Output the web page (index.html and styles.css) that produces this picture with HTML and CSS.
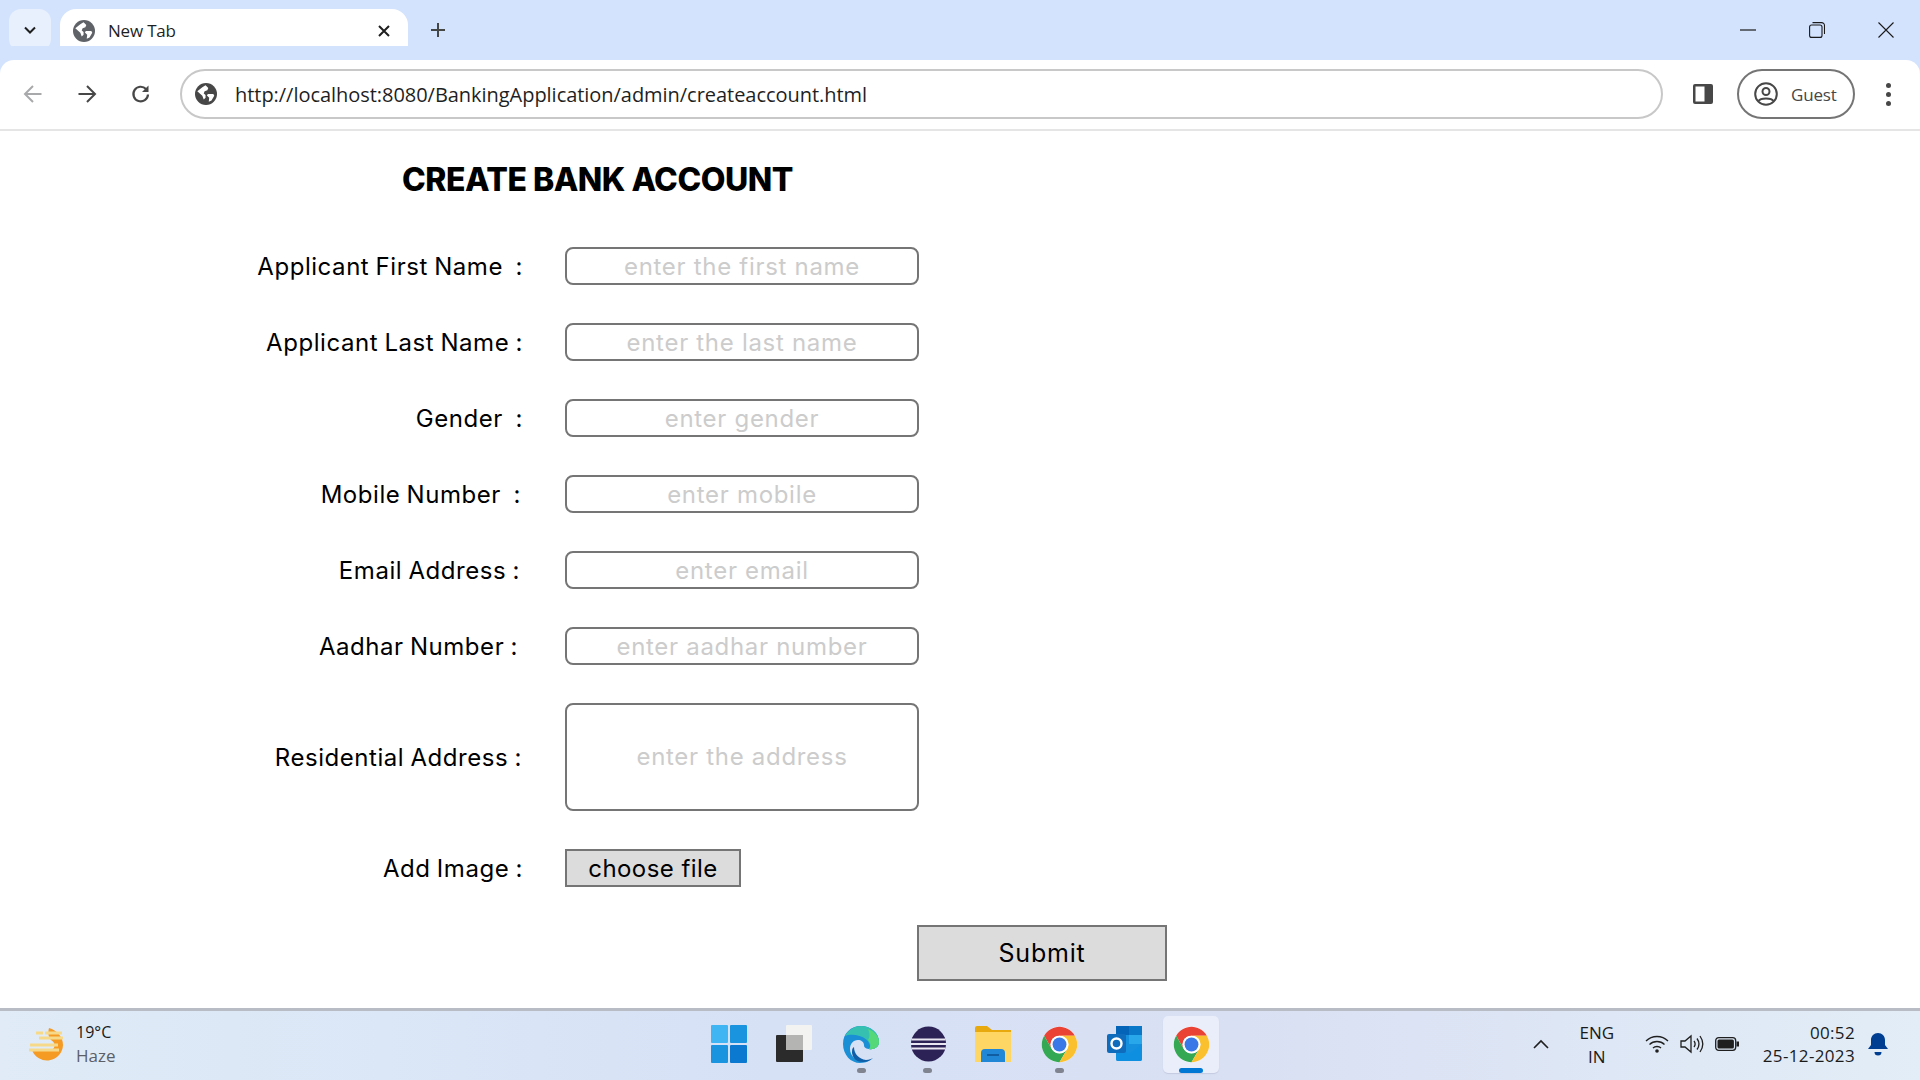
FILE: index.html
```html
<!DOCTYPE html>
<html lang="en">
  <head>
    <meta charset="UTF-8" />
    <title>New Tab</title>
    <link rel="stylesheet" href="styles.css">
  </head>
  <body>
    <svg class="defs" width="0" height="0">
      <defs>
        <symbol id="globe" viewBox="0 0 24 24">
          <circle cx="12" cy="12" r="12" fill="currentColor"/>
          <path d="M2.500 9 8 4.500 11.500 2.500l3 3-1 2.500-3 1-1 2.500 2 1.500v3l-2 2-1.500-4L2.500 9Z" fill="#fff"/>
          <path d="M14 12h6l1 2-3 5-3 1.500.5-4.500-2.500-2.500 1-1.500Z" fill="#fff"/>
        </symbol>
        <symbol id="chrome" viewBox="0 0 48 48">
          <circle cx="24" cy="24" r="23" fill="#fff"/>
          <path d="M4.100 12.500A23 23 0 0 1 43.900 12.500H24A11.500 11.500 0 0 0 14 29.750Z" fill="#ea4335"/>
          <path d="M4.100 12.500A23 23 0 0 0 24 47L34 29.750A11.500 11.500 0 0 1 14 29.750Z" fill="#34a853"/>
          <path d="M43.900 12.500A23 23 0 0 1 24 47L34 29.750A11.500 11.500 0 0 0 24 12.500Z" fill="#fbc02d"/>
          <circle cx="24" cy="24" r="11.500" fill="#fff"/>
          <circle cx="24" cy="24" r="9" fill="#3b78e7"/>
        </symbol>
      </defs>
    </svg>

    <header class="tabstrip">
      <button class="tab-search">
        <svg width="16" height="16" viewBox="0 0 16 16"><path d="M3 5.500 8 10.500l5-5" fill="none" stroke="#1f1f1f" stroke-width="2"/></svg>
      </button>
      <div class="tab">
        <svg class="tab-globe" width="22" height="22"><use href="#globe"/></svg>
        <span class="tab-title">New Tab</span>
        <svg width="14" height="14" viewBox="0 0 14 14"><path d="M2 2l10 10M12 2 2 12" stroke="#1f1f1f" stroke-width="2"/></svg>
      </div>
      <button class="new-tab">
        <svg width="16" height="16" viewBox="0 0 16 16"><path d="M8 1v14M1 8h14" stroke="#444746" stroke-width="2"/></svg>
      </button>
      <div class="window-controls">
        <button><svg width="16" height="16" viewBox="0 0 16 16"><path d="M0 8h16" stroke="#1a1a1a" stroke-width="1.200"/></svg></button>
        <button><svg width="16" height="16" viewBox="0 0 16 16" fill="none" stroke="#1a1a1a" stroke-width="1.100"><rect x=".6" y="3" width="12.400" height="12.400" rx="2"/><path d="M3.500.6h9a3 3 0 0 1 3 3v8.500"/></svg></button>
        <button><svg width="16" height="16" viewBox="0 0 16 16"><path d="M.5.500l15 15M15.500.500l-15 15" stroke="#1a1a1a" stroke-width="1.100"/></svg></button>
      </div>
    </header>

    <nav class="toolbar">
      <button class="nav-btn">
        <svg width="20" height="20" viewBox="0 0 20 20" fill="none" stroke="#a8a9aa" stroke-width="2"><path d="M18.500 10H2M10 2l-8 8 8 8"/></svg>
      </button>
      <button class="nav-btn">
        <svg width="20" height="20" viewBox="0 0 20 20" fill="none" stroke="#474747" stroke-width="2"><path d="M1.500 10H18M10 2l8 8-8 8"/></svg>
      </button>
      <button class="nav-btn">
        <svg width="20" height="20" viewBox="0 0 20 20" fill="none" stroke="#474747" stroke-width="2.200"><path d="M17 10.500A7.300 7.300 0 1 1 15 5"/><path d="M17.500 1.500v6.500h-6.500z" fill="#474747" stroke="none"/></svg>
      </button>
      <div class="omnibox">
        <svg class="omni-globe" width="22" height="22"><use href="#globe"/></svg>
        <span class="url">http://localhost:8080/BankingApplication/admin/createaccount.html</span>
      </div>
      <button class="side-btn">
        <svg width="22" height="22" viewBox="0 0 22 22"><rect x="1" y="1" width="20" height="20" rx="2" fill="#474747"/><rect x="3.500" y="3.500" width="9" height="15" fill="#fff"/></svg>
      </button>
      <div class="guest">
        <svg width="24" height="24" viewBox="0 0 24 24" fill="none" stroke="#474747" stroke-width="2"><circle cx="12" cy="12" r="10.800"/><circle cx="12" cy="9.500" r="3.500"/><path d="M4.500 19c2-3.500 13-3.500 15 0"/></svg>
        <span>Guest</span>
      </div>
      <button class="menu-btn">
        <i></i><i></i><i></i>
      </button>
    </nav>

    <main class="page">
      <h1 class="title">CREATE BANK ACCOUNT</h1>
      <form class="account-form">
        <label class="field-label">Applicant First Name&nbsp; :</label>
        <input class="field" type="text" placeholder="enter the first name">
        <label class="field-label">Applicant Last Name :</label>
        <input class="field" type="text" placeholder="enter the last name">
        <label class="field-label">Gender&nbsp; :</label>
        <input class="field" type="text" placeholder="enter gender">
        <label class="field-label nudge-2">Mobile Number&nbsp; :</label>
        <input class="field" type="text" placeholder="enter mobile">
        <label class="field-label nudge-4">Email Address :</label>
        <input class="field" type="text" placeholder="enter email">
        <label class="field-label nudge-5">Aadhar Number :</label>
        <input class="field" type="text" placeholder="enter aadhar number">
        <label class="field-label nudge-1">Residential Address :</label>
        <textarea class="field area" placeholder="enter the address"></textarea>
        <label class="field-label">Add Image :</label>
        <button class="file-btn" type="button">choose file</button>
        <button class="submit-btn" type="button">Submit</button>
      </form>
    </main>

    <footer class="taskbar">
      <div class="weather">
        <svg width="40" height="40" viewBox="0 0 40 40">
          <path d="M22 4c8 2 14 9 14 17a16 16 0 0 1-31 5h20c4-3 3-8-1-10-3-3-3-8-2-12Z" fill="#f59a23"/>
          <path d="M9 9h7M18 9h17M12 14h24M3 21h28M2 26h30" stroke="#f7d98a" stroke-width="3"/>
        </svg>
        <div class="weather-text">
          <span class="temp">19°C</span>
          <span class="cond">Haze</span>
        </div>
      </div>

      <div class="apps">
        <div class="app">
          <svg width="36" height="38" viewBox="0 0 36 38">
            <rect x="0" y="0" width="17" height="18" rx="1" fill="#3fb6f3"/>
            <rect x="19" y="0" width="17" height="18" rx="1" fill="#1b94e0"/>
            <rect x="0" y="20" width="17" height="18" rx="1" fill="#1b94e0"/>
            <rect x="19" y="20" width="17" height="18" rx="1" fill="#0c79d1"/>
          </svg>
        </div>
        <div class="app">
          <svg width="38" height="38" viewBox="0 0 38 38">
            <rect x="0" y="10" width="27" height="27" rx="1" fill="#2b2b2b"/>
            <rect x="10" y="0" width="26" height="25" rx="1" fill="#f3f3f1"/>
            <rect x="10" y="10" width="17" height="15" fill="#b4b4b2"/>
          </svg>
        </div>
        <div class="app dot">
          <svg width="38" height="38" viewBox="0 0 38 38">
            <path d="M1 19C1 8 9 1 19 1c10 0 18 7 18 16 0 5-5 8-10 7-4-.5-5-2-5-4 0-3-3-5-6-5-5 0-8 4-8 9 0 7 6 12 13 12 3 0 6-1 8-2-3 3-7 4-11 4C9 38 1 30 1 19Z" fill="#1b8fd6"/>
            <path d="M3 11C7 4 13 1 19 1c10 0 18 7 18 16 0 5-5 8-10 7 2-2 1-6-2-9C18 9 8 9 3 11Z" fill="#35c0b0"/>
            <path d="M26 4c6 2 11 7 11 13 0 5-5 8-10 7 2-2 2-6-1-9 2-3 2-7 0-11Z" fill="#55d878"/>
            <path d="M12 22c0 7 5 12 12 13 3 0 5-1 7-2-3 3-7 4-10 4-6 0-10-3-11-9 0-3 0-5 2-6Z" fill="#0f5fa8"/>
          </svg>
        </div>
        <div class="app dot">
          <svg width="38" height="38" viewBox="0 0 38 38">
            <path d="M19 0a19 19 0 0 0 0 38A19 19 0 0 1 19 0Z" fill="#f0961f"/>
            <circle cx="20.500" cy="19" r="17.500" fill="#2c2255"/>
            <path d="M3.500 14.500h34M3 19h35M3.500 23.500h34" stroke="#e9e6f2" stroke-width="2"/>
          </svg>
        </div>
        <div class="app">
          <svg width="38" height="36" viewBox="0 0 38 36">
            <path d="M1 2a2 2 0 0 1 2-2h10l5 4h19v32H1Z" fill="#e8a90e"/>
            <path d="M1 6h36v30H1Z" fill="#fdd663"/>
            <path d="M7 27a4 4 0 0 1 4-4h16a4 4 0 0 1 4 4v9H7Z" fill="#1f87d6"/>
            <path d="M13 29h12" stroke="#0c4f8f" stroke-width="1.500"/>
          </svg>
        </div>
        <div class="app dot"><svg width="37" height="37"><use href="#chrome"/></svg></div>
        <div class="app">
          <svg width="36" height="36" viewBox="0 0 36 36">
            <rect x="9" y="0" width="26" height="35" rx="2" fill="#1490df"/>
            <rect x="9" y="0" width="13" height="9" fill="#0364b8"/>
            <rect x="22" y="0" width="13" height="9" fill="#0a78c8"/>
            <rect x="22" y="9" width="13" height="9" fill="#28a8ea"/>
            <path d="M9 18 22 28 35 18v15a2 2 0 0 1-2 2H11a2 2 0 0 1-2-2Z" fill="#0f8fe0"/>
            <rect x="0" y="8" width="19" height="19" rx="2" fill="#0f6cbd"/>
            <circle cx="9.500" cy="17.500" r="5" fill="none" stroke="#fff" stroke-width="2.400"/>
          </svg>
        </div>
        <div class="app active"><svg width="37" height="37"><use href="#chrome"/></svg></div>
      </div>

      <div class="tray">
        <svg class="tray-chevron" width="16" height="10" viewBox="0 0 16 10"><path d="M1 9l7-7 7 7" fill="none" stroke="#1f1f1f" stroke-width="1.600"/></svg>
        <div class="lang"><span>ENG</span><span>IN</span></div>
        <div class="tray-icons">
          <svg width="24" height="20" viewBox="0 0 24 20" fill="none" stroke="#1f1f1f" stroke-width="1.300"><path d="M1 7c6-6 16-6 22 0M4.500 10.500c4-4 11-4 15 0M8 14c2-2 6-2 8 0"/><circle cx="12" cy="17" r="1.800" fill="#1f1f1f" stroke="none"/></svg>
          <svg width="24" height="20" viewBox="0 0 24 20" fill="none" stroke="#1f1f1f" stroke-width="1.300"><path d="M1 7v6h4l6 5V2L5 7Z"/><path d="M14 7c1.500 2 1.500 4 0 6M17 4.500c2.500 3.500 2.500 7.500 0 11M20 2c3.500 5 3.500 11 0 16"/></svg>
          <svg width="24" height="14" viewBox="0 0 24 14"><rect x=".7" y=".7" width="20" height="12.600" rx="3" fill="none" stroke="#1f1f1f" stroke-width="1.300"/><rect x="2.500" y="2.500" width="16.400" height="9" rx="1.500" fill="#1f1f1f"/><rect x="21.500" y="4.500" width="2.500" height="5" fill="#1f1f1f"/></svg>
        </div>
        <div class="clock"><span>00:52</span><span>25-12-2023</span></div>
        <svg class="bell" width="20" height="24" viewBox="0 0 20 24"><path d="M10 1c4 0 7 3 7 7v5l3 4H0l3-4V8c0-4 3-7 7-7Z" fill="#003e92"/><path d="M6.500 20h7a3.500 3.500 0 0 1-7 0Z" fill="#003e92"/></svg>
      </div>
    </footer>
  </body>
</html>
```
FILE: styles.css
```css
* {
  box-sizing: border-box;
  padding: 0;
  margin: 0;
}
html {
  font-family: "Open Sans", "Noto Sans", sans-serif;
}
body {
  display: flex;
  flex-direction: column;
  height: 1080px;
  overflow: hidden;
  background-color: #fff;
}
button {
  display: flex;
  align-items: center;
  justify-content: center;
  border: none;
  background: none;
}
.defs {
  display: block;
  height: 0;
}

/* browser chrome */
.tabstrip {
  display: flex;
  align-items: flex-end;
  height: 60px;
  padding-left: 9px;
  background-color: #d3e3fd;
}
.tab-search {
  width: 42px;
  height: 42px;
  margin-bottom: 9px;
  border-radius: 12px;
  background-color: #e8f0fe;
}
.tab {
  position: relative;
  display: flex;
  align-items: center;
  width: 348px;
  height: 51px;
  margin-left: 9px;
  padding: 0 17px 8px 13px;
  border-radius: 16px 16px 0 0;
  background-color: #fff;
}
.tab::before,
.tab::after {
  content: "";
  position: absolute;
  bottom: 0;
  width: 14px;
  height: 14px;
  background-color: #d3e3fd;
}
.tab::before {
  left: -14px;
  border-bottom-right-radius: 14px;
  box-shadow: 5px 5px 0 #fff;
}
.tab::after {
  right: -14px;
  border-bottom-left-radius: 14px;
  box-shadow: -5px 5px 0 #fff;
}
.tab-globe {
  color: #5f6368;
}
.tab-title {
  flex: 1;
  margin-left: 13px;
  font-size: 17px;
  letter-spacing: -0.2px;
  color: #1f1f1f;
}
.new-tab {
  width: 30px;
  height: 30px;
  margin: 0 0 15px 15px;
}
.window-controls {
  display: flex;
  margin-left: auto;
  height: 60px;
}
.window-controls button {
  width: 69px;
}
.toolbar {
  position: relative;
  display: flex;
  align-items: center;
  height: 71px;
  padding: 0 12px 1px 6px;
  border-bottom: 2px solid #e5e5e5;
  border-radius: 14px 14px 0 0;
  background-color: #fff;
}
.tabstrip + .toolbar {
  box-shadow: 0 -14px 0 #d3e3fd;
}
.nav-btn {
  width: 54px;
  height: 50px;
}
.omnibox {
  display: flex;
  flex: 1;
  align-items: center;
  height: 50px;
  margin-left: 12px;
  padding-left: 13px;
  border: 2px solid #c8c8c8;
  border-radius: 25px;
}
.omni-globe {
  color: #474747;
}
.url {
  margin-left: 18px;
  font-size: 20px;
  letter-spacing: -0.04px;
  color: #1f1f1f;
}
.side-btn {
  width: 40px;
  height: 40px;
  margin-left: 20px;
}
.guest {
  display: flex;
  align-items: center;
  width: 118px;
  height: 50px;
  margin-left: 14px;
  padding-left: 15px;
  border: 2px solid #757575;
  border-radius: 25px;
  font-size: 17px;
  letter-spacing: -0.2px;
  color: #474747;
}
.guest span {
  margin-left: 13px;
}
.menu-btn {
  flex-direction: column;
  gap: 4px;
  width: 40px;
  height: 40px;
  margin-left: 13px;
}
.menu-btn i {
  width: 5px;
  height: 5px;
  border-radius: 50%;
  background-color: #474747;
}

/* the form */
.page {
  flex: 1;
  font-family: Inter, "Noto Sans", sans-serif;
  color: #000;
}
.title {
  margin: 27px 0 45px 402px;
  font-size: 32px;
  line-height: 44px;
  font-weight: 800;
  letter-spacing: -0.5px;
}
.account-form {
  display: grid;
  grid-template-columns: 523px 354px;
  column-gap: 42px;
  row-gap: 38px;
  align-items: center;
}
.field-label {
  justify-self: end;
  font-size: 24px;
  letter-spacing: 0.55px;
  word-spacing: -1px;
  white-space: nowrap;
}
.nudge-1 {
  margin-right: 1px;
}
.nudge-2 {
  margin-right: 2px;
}
.nudge-4 {
  margin-right: 3px;
}
.nudge-5 {
  margin-right: 5px;
}
.field {
  width: 354px;
  height: 38px;
  border: 2px solid #757575;
  border-radius: 8px;
  outline: none;
  font: inherit;
  font-size: 24px;
  letter-spacing: 0.7px;
  text-align: center;
  background-color: #fff;
}
.field::placeholder {
  color: #ccc;
  opacity: 1;
}
.area {
  display: block;
  height: 108px;
  padding-top: 37px;
  resize: none;
}
.file-btn {
  width: 176px;
  height: 38px;
  border: 2px solid #757575;
  font: inherit;
  font-size: 24px;
  letter-spacing: 0.45px;
  background-color: #dcdcdc;
}
.submit-btn {
  grid-column: 2;
  width: 250px;
  height: 56px;
  margin-left: 352px;
  border: 2px solid #757575;
  font: inherit;
  font-size: 25px;
  letter-spacing: 0.8px;
  background-color: #dcdcdc;
}

/* windows taskbar */
.taskbar {
  display: grid;
  grid-template-columns: 1fr auto 1fr;
  align-items: center;
  height: 72px;
  padding-bottom: 3px;
  border-top: 3px solid #b8bcc4;
  background: linear-gradient(90deg, #e0ebf7 0%, #d6e1f6 40%, #d9e0f3 65%, #e2edf7 100%);
}
.weather {
  display: flex;
  align-items: center;
  padding-left: 27px;
}
.weather-text {
  display: flex;
  flex-direction: column;
  margin-left: 9px;
  font-size: 16px;
  line-height: 24px;
  color: #1a1a1a;
}
.cond {
  font-size: 17px;
  color: #5c5f66;
}
.apps {
  display: flex;
}
.app {
  position: relative;
  display: flex;
  align-items: center;
  justify-content: center;
  width: 66px;
  height: 57px;
}
.app.active::before {
  content: "";
  position: absolute;
  top: 0;
  bottom: 0;
  left: 5px;
  right: 5px;
  border-radius: 5px;
  background-color: #e9eefa;
  box-shadow: 0 1px 1px #c4cbe0;
}
.app svg {
  position: relative;
}
.app.dot::after,
.app.active::after {
  content: "";
  position: absolute;
  bottom: 0;
  left: 50%;
  width: 9px;
  height: 5px;
  margin-left: -4.5px;
  border-radius: 3px;
  background-color: #7f8490;
}
.app.active::after {
  width: 24px;
  margin-left: -12px;
  background-color: #0078d4;
}
.tray {
  display: flex;
  align-items: center;
  justify-content: flex-end;
  color: #1a1a1a;
}
.lang {
  display: flex;
  flex-direction: column;
  width: 50px;
  margin-left: 23px;
  padding-top: 2px;
  font-size: 17px;
  line-height: 24px;
  text-align: center;
}
.tray-icons {
  display: flex;
  align-items: center;
  gap: 11px;
  margin-left: 23px;
}
.clock {
  display: flex;
  flex-direction: column;
  align-items: flex-end;
  margin-left: 24px;
  font-size: 17px;
  letter-spacing: 0.35px;
  line-height: 23px;
}
.bell {
  margin: 0 32px 0 13px;
}
```
